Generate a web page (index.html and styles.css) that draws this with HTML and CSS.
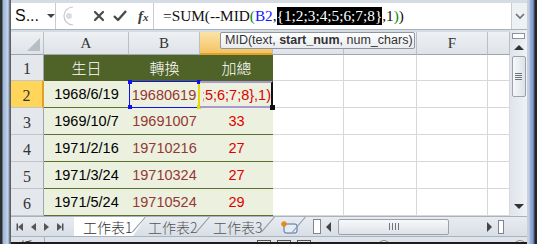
FILE: index.html
```html
<!DOCTYPE html>
<html lang="zh-Hant">
<head>
    <meta charset="UTF-8">
    <title>工作表1</title>
    <link rel="stylesheet" href="styles.css">
</head>
<body>
<div class="app">
    <div class="frame-left"></div>
    <div class="main">
        <div class="formula-bar">
            <div class="name-box">S...<span class="caret"></span></div>
            <div class="fx-buttons">
                <svg class="grip" width="14" height="20" viewBox="0 0 14 20"><path d="M13 1 A9 9 0 0 0 13 19" fill="none" stroke="#c3c8cf" stroke-width="1.2"/><circle cx="9" cy="10" r="3" fill="#d9dde2"/></svg>
                <svg class="btn" width="14" height="14" viewBox="0 0 14 14"><path d="M3 3 L11 11 M11 3 L3 11" stroke="#4a4a4a" stroke-width="2.2" stroke-linecap="round"/></svg>
                <svg class="btn" width="16" height="14" viewBox="0 0 16 14"><path d="M2 7 L6 11 L14 2" fill="none" stroke="#4a4a4a" stroke-width="2.4" stroke-linejoin="round"/></svg>
                <span class="fx">f<small>x</small></span>
            </div>
            <div class="formula">=SUM(--MID<span class="paren">(</span><span class="ref">B2</span>,<span class="sel">{1;2;3;4;5;6;7;8}</span>,1<span class="paren">)</span>)</div>
            <div class="expand">
                <svg width="10" height="8" viewBox="0 0 10 8"><path d="M1 2 L5 6 L9 2" fill="none" stroke="#6b6f75" stroke-width="1.6"/></svg>
            </div>
        </div>

        <div class="sheet">
            <div class="grid">
                <div class="hd corner"><span class="tri"></span></div>
                <div class="hd">A</div>
                <div class="hd">B</div>
                <div class="hd hd-active"></div>
                <div class="hd"></div>
                <div class="hd"></div>
                <div class="hd">F</div>
                <div class="hd"></div>

                <div class="rh">1</div>
                <div class="g-head">生日</div>
                <div class="g-head">轉換</div>
                <div class="g-head">加總</div>
                <div class="c"></div><div class="c"></div><div class="c"></div><div class="c"></div>

                <div class="rh rh-active">2</div>
                <div class="g date">1968/6/19</div>
                <div class="g code ref-box">19680619
                    <span class="dot tl"></span><span class="dot bl"></span><span class="dot tr"></span><span class="dot br"></span>
                </div>
                <div class="g edit"><span class="edit-text"><span>;5;6;7;8},1)</span></span><span class="handle"></span></div>
                <div class="c"></div><div class="c"></div><div class="c"></div><div class="c"></div>

                <div class="rh">3</div>
                <div class="g date">1969/10/7</div>
                <div class="g code">19691007</div>
                <div class="g sum">33</div>
                <div class="c"></div><div class="c"></div><div class="c"></div><div class="c"></div>

                <div class="rh">4</div>
                <div class="g date">1971/2/16</div>
                <div class="g code">19710216</div>
                <div class="g sum">27</div>
                <div class="c"></div><div class="c"></div><div class="c"></div><div class="c"></div>

                <div class="rh">5</div>
                <div class="g date">1971/3/24</div>
                <div class="g code">19710324</div>
                <div class="g sum">27</div>
                <div class="c"></div><div class="c"></div><div class="c"></div><div class="c"></div>

                <div class="rh">6</div>
                <div class="g date">1971/5/24</div>
                <div class="g code">19710524</div>
                <div class="g sum">29</div>
                <div class="c"></div><div class="c"></div><div class="c"></div><div class="c"></div>
            </div>

            <div class="vscroll">
                <span class="split"></span>
                <span class="arrow-up"></span>
                <span class="thumb"><i></i><i></i><i></i><i></i></span>
                <span class="spacer"></span>
                <span class="arrow-down"></span>
            </div>

            <div class="tooltip">MID(text, <b>start_num</b>, num_chars)</div>
        </div>

        <div class="tabbar">
            <div class="tab-nav">
                <span class="nav first"></span>
                <span class="nav prev"></span>
                <span class="nav next"></span>
                <span class="nav last"></span>
            </div>
            <div class="tabs">
                <span class="tab active">工作表1</span>
                <span class="tab tab-2">工作表2</span>
                <span class="tab tab-3">工作表3</span>
                <span class="tab new-tab">
                    <svg width="20" height="14" viewBox="0 0 20 14"><rect x="5" y="4" width="13" height="9" rx="2" fill="#e4ecf6" stroke="#4e6f9c"/><path d="M5 1 L5 7 M2 4 L8 4 M3 2 L7 6 M7 2 L3 6" stroke="#e58a16" stroke-width="1.3"/></svg>
                </span>
            </div>
            <span class="tab-split"></span>
            <div class="hscroll">
                <span class="arrow-left"></span>
                <span class="hthumb"><i></i><i></i><i></i><i></i></span>
                <span class="spacer"></span>
                <span class="arrow-right"></span>
                <span class="hsplit"></span>
            </div>
        </div>

        <div class="statusbar">
            <span class="status-text">編輯</span>
            <span class="status-sep"></span>
            <span class="status-right">
                <span class="view"></span><span class="view"></span><span class="view"></span>
                <span class="zoom-text">100%</span>
                <span class="zoom-btn"></span>
                <span class="zoom-line"></span>
                <span class="zoom-btn"></span>
            </span>
        </div>
    </div>
    <div class="frame-right"></div>
</div>
</body>
</html>
```

FILE: styles.css
```css
body {
    margin: 0;
    background: #1c1c1c;
    font-family: "Liberation Sans", Arial, sans-serif;
}

.app {
    display: flex;
    width: 537px;
    height: 244px;
    overflow: hidden;
}

.frame-left {
    width: 11px;
    background: linear-gradient(to right, #2c312c 0, #2c312c 2px, #9db4da 3px, #c4d4ec 8px, #8c99ab 9px, #5d626a 10px);
}

.frame-right {
    width: 10px;
    background: linear-gradient(to right, #c9d1db 0, #c9d1db 2px, #9cb3de 3px, #7c9ad1 6px, #56698f 7px, #262626 8px);
}

.main {
    width: 516px;
    height: 242px;
    display: flex;
    flex-direction: column;
    background: #d6dce4;
    padding-top: 3px;
    box-sizing: border-box;
}

/* formula bar */
.formula-bar {
    height: 26px;
    display: flex;
    background: #fff;
    border-bottom: 1px solid #a9b1bb;
    flex-shrink: 0;
}

.name-box {
    width: 40px;
    padding-left: 4px;
    display: flex;
    align-items: center;
    font-size: 16px;
    color: #111;
    border-right: 1px solid #c6ccd4;
}

.caret {
    margin-left: 8px;
    border-left: 4px solid transparent;
    border-right: 4px solid transparent;
    border-top: 4px solid #444;
}

.fx-buttons {
    width: 97px;
    display: flex;
    align-items: center;
    border-right: 1px solid #c6ccd4;
}

.grip {
    margin-left: 4px;
    margin-right: 18px;
}

.btn {
    margin-right: 6px;
}

.fx {
    margin-left: 4px;
    font-family: "Liberation Serif", serif;
    font-style: italic;
    font-weight: bold;
    font-size: 15px;
    color: #3a3a3a;
}

.fx small {
    font-size: 11px;
}

.formula {
    flex: 1;
    padding-left: 9px;
    display: flex;
    align-items: center;
    font-family: "Liberation Serif", serif;
    font-size: 15.3px;
    color: #111;
    white-space: pre;
}

.ref {
    color: #1515ff;
}

.paren {
    color: #0a8a0a;
}

.sel {
    background: #000;
    color: #fff;
}

.expand {
    width: 15px;
    display: flex;
    align-items: center;
    justify-content: center;
    background: #eef1f4;
    border-left: 1px solid #c6ccd4;
}

/* sheet */
.sheet {
    position: relative;
    display: flex;
    height: 186px;
    flex-shrink: 0;
}

.grid {
    width: 499px;
    margin-top: 2px;
    display: grid;
    grid-template-columns: 33px 85px 71px 73px 71px 73px 71px 22px;
    grid-template-rows: 23px 26px 27px 27px 27px 27px 27px;
    background: #fff;
    overflow: hidden;
}

.grid > div {
    box-sizing: border-box;
    display: flex;
    align-items: center;
    justify-content: center;
}

.hd {
    background: linear-gradient(#eef0f3, #dfe3e8);
    border-right: 1px solid #b9bfc7;
    border-bottom: 1px solid #9ea6b0;
    font-family: "Liberation Serif", serif;
    font-size: 15px;
    color: #333;
}

.hd-active {
    background: linear-gradient(#fbe3a8, #f3c462);
    border-bottom: 2px solid #e19f2b;
}

.corner {
    position: relative;
}

.tri {
    position: absolute;
    right: 3px;
    bottom: 3px;
    border-left: 13px solid transparent;
    border-bottom: 13px solid #b8bec6;
}

.rh {
    background: #e4e7eb;
    border-right: 1px solid #9ea6b0;
    border-bottom: 1px solid #c0c5cc;
    font-family: "Liberation Serif", serif;
    font-size: 16px;
    color: #333;
    padding-top: 3px;
}

.rh-active {
    background: #ffd55a;
    border-right: 2px solid #e19f2b;
}

.c {
    border-right: 1px solid #d8d8d8;
    border-bottom: 1px solid #d8d8d8;
}

.g-head {
    background: #4f6228;
    color: #fff;
    font-family: "Noto Sans CJK TC", sans-serif;
    font-weight: 300;
    font-size: 15px;
    border-bottom: 1px solid #4f6228;
}

.g {
    background: #ebf1de;
    border-bottom: 1px solid #5b6f2e;
    font-size: 14.5px;
}

.date {
    color: #000;
}

.code {
    color: #953735;
}

.sum {
    color: #e00000;
}

.ref-box {
    position: relative;
    border: 1px solid #1010f0;
    border-right: 2px solid #e6d800;
}

.dot {
    position: absolute;
    width: 4px;
    height: 4px;
    background: #1010f0;
}

.tl { left: -2px; top: -2px; }
.bl { left: -2px; bottom: -2px; }
.tr { right: -3px; top: -2px; }
.br { right: -3px; bottom: -2px; background: #e6d800; }

.grid > .edit {
    position: relative;
    justify-content: flex-end;
    border-top: 2px solid #a999cc;
    border-bottom: 2px solid #a999cc;
    border-right: 2px solid #111;
}

.edit-text {
    display: flex;
    justify-content: flex-end;
    width: 68px;
    overflow: hidden;
    white-space: nowrap;
    color: #e00000;
    font-size: 14.5px;
}

.edit-text span {
    flex-shrink: 0;
}

.handle {
    position: absolute;
    right: -4px;
    bottom: -4px;
    width: 5px;
    height: 5px;
    background: #111;
}

/* scrollbar */
.vscroll {
    width: 17px;
    display: flex;
    flex-direction: column;
    align-items: center;
    background: linear-gradient(to right, #e0e5eb, #eef1f5);
}

.split {
    margin-top: 3px;
    width: 11px;
    height: 4px;
    background: #fff;
    border: 1px solid #8c939c;
}

.arrow-up {
    margin-top: 6px;
    border-left: 5px solid transparent;
    border-right: 5px solid transparent;
    border-bottom: 5px solid #333;
}

.thumb,
.hthumb {
    display: flex;
    flex-direction: column;
    align-items: center;
    justify-content: center;
    gap: 1px;
    box-sizing: border-box;
    background: linear-gradient(to right, #f6f8fa, #dde2e8);
    border: 1px solid #9aa2ad;
    border-radius: 2px;
}

.thumb {
    margin-top: 6px;
    width: 14px;
    height: 41px;
}

.thumb i {
    width: 7px;
    height: 1px;
    background: #6e757f;
}

.spacer {
    flex: 1;
}

.arrow-down {
    margin-bottom: 7px;
    border-left: 5px solid transparent;
    border-right: 5px solid transparent;
    border-top: 5px solid #333;
}

.tooltip {
    position: absolute;
    left: 209px;
    top: 2px;
    width: 195px;
    height: 17px;
    box-sizing: border-box;
    padding-left: 4px;
    background: linear-gradient(#ffffff, #e8ebef);
    border: 1px solid #8f969f;
    border-radius: 2px;
    font-size: 12.5px;
    line-height: 15px;
    color: #333;
    white-space: nowrap;
}

/* sheet tabs */
.tabbar {
    height: 19px;
    display: flex;
    background: linear-gradient(#e8ecf1, #d9dfe7);
    border-top: 1px solid #aab2bc;
    flex-shrink: 0;
}

.tab-nav {
    width: 63px;
    display: flex;
    align-items: center;
    gap: 8px;
    padding-left: 7px;
    box-sizing: border-box;
}

.nav {
    width: 0;
    height: 0;
    border-top: 4px solid transparent;
    border-bottom: 4px solid transparent;
}

.nav.first,
.nav.prev {
    border-right: 5px solid #555;
}

.nav.next,
.nav.last {
    border-left: 5px solid #555;
}

.nav.first {
    box-shadow: -2px 0 0 -0.5px #555;
}

.nav.last {
    box-shadow: 2px 0 0 -0.5px #555;
}

.tabs {
    display: flex;
    width: 236px;
}

.tab {
    position: relative;
    width: 72px;
    display: flex;
    align-items: center;
    padding-left: 9px;
    box-sizing: border-box;
    font-family: "Noto Sans CJK TC", sans-serif;
    font-weight: 300;
    font-size: 14px;
    color: #555;
}

.tab::after {
    content: "";
    position: absolute;
    right: 0;
    top: 0;
    width: 1px;
    height: 20px;
    background: #8f98a3;
    transform: rotate(41deg);
    transform-origin: top;
}

.tab.active {
    background: #fff;
    clip-path: polygon(0 0, 100% 0, calc(100% - 13px) 100%, 0 100%);
    color: #333;
}

.tab-2 {
    width: 64px;
    padding-left: 2px;
}

.tab-3 {
    width: 65px;
    padding-left: 3px;
}

.new-tab {
    width: 31px;
    padding-left: 4px;
}

.tab-split {
    width: 6px;
    margin: 2px 1px 2px 3px;
    background: #fff;
    border: 1px solid #7d8590;
}

.hscroll {
    width: 187px;
    display: flex;
    align-items: center;
    padding: 0 5px 0 4px;
    box-sizing: border-box;
}

.arrow-left {
    border-top: 5px solid transparent;
    border-bottom: 5px solid transparent;
    border-right: 5px solid #444;
}

.hthumb {
    margin-left: 7px;
    width: 111px;
    height: 16px;
    flex-direction: row;
    gap: 2px;
    background: linear-gradient(#f7f9fb, #dde2e8);
}

.hthumb i {
    width: 1px;
    height: 7px;
    background: #6e757f;
}

.arrow-right {
    border-top: 5px solid transparent;
    border-bottom: 5px solid transparent;
    border-left: 5px solid #444;
    margin-right: 6px;
}

.hsplit {
    width: 4px;
    height: 12px;
    background: #fff;
    border: 1px solid #7d8590;
}

/* status bar */
.statusbar {
    flex: 1;
    display: flex;
    overflow: hidden;
    background: #dfe4ea;
    border-top: 1px solid #aab2bc;
}

.status-text {
    margin-left: 9px;
    margin-top: 1px;
    width: 32px;
    font-family: "Noto Sans CJK TC", sans-serif;
    font-size: 13px;
    line-height: 16px;
    color: #333;
}

.status-sep {
    width: 1px;
    background: #aab2bc;
}

.status-right {
    margin-left: 212px;
    display: flex;
    gap: 6px;
    padding-top: 3px;
}

.view {
    width: 12px;
    height: 10px;
    border: 1px solid #555;
}

.zoom-text {
    margin-left: 12px;
    font-size: 11px;
    color: #888;
}

.zoom-btn {
    margin-left: 14px;
    width: 12px;
    height: 12px;
    border-radius: 50%;
    border: 1px solid #888;
    background: #eef0f3;
}

.zoom-line {
    width: 96px;
}
```
